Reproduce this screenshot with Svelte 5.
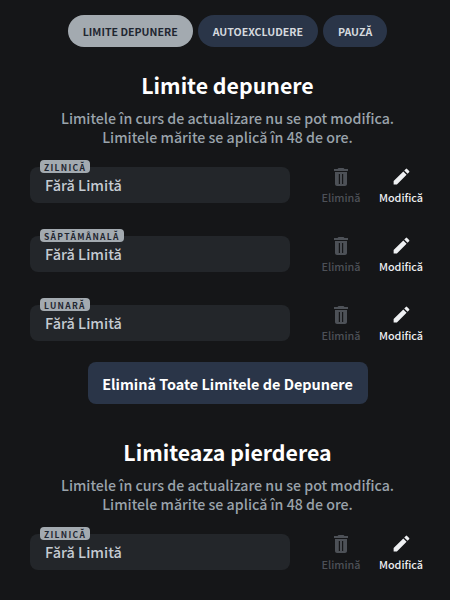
<script>
  const deposit = ['ZILNICĂ', 'SĂPTĂMÂNALĂ', 'LUNARĂ'];
  const loss = ['ZILNICĂ'];
</script>

{#snippet limitRow(label)}
  <div class="row">
    <div class="field">
      <span class="tag">{label}</span>
      <span class="value">Fără Limită</span>
    </div>
    <div class="action off">
      <svg viewBox="0 0 24 24" width="24" height="24"><path fill-rule="evenodd" d="M6 19c0 1.100.9 2 2 2h8c1.100 0 2-.9 2-2V7H6v12zM9.800 9h1.200v10H9.800V9zm3.200 0h1.200v10H13V9zM15.500 4l-1-1h-5l-1 1H5v2h14V4h-3.500z"/></svg>
      <span>Elimină</span>
    </div>
    <div class="action">
      <svg class="pen" viewBox="0 0 24 24" width="21" height="21"><path d="M3 17.25V21h3.750L17.810 9.940l-3.750-3.750L3 17.250zM20.710 7.040a1 1 0 0 0 0-1.410l-2.340-2.340a1 1 0 0 0-1.410 0l-1.830 1.830 3.750 3.750 1.830-1.830z"/></svg>
      <span>Modifică</span>
    </div>
  </div>
{/snippet}

<div class="page">
  <nav class="tabs">
    <button class="tab active">LIMITE DEPUNERE</button>
    <button class="tab">AUTOEXCLUDERE</button>
    <button class="tab">PAUZĂ</button>
  </nav>

  <h2>Limite depunere</h2>
  <p>Limitele în curs de actualizare nu se pot modifica.<br />Limitele mărite se aplică în 48 de ore.</p>
  <div class="rows">
    {#each deposit as label}
      {@render limitRow(label)}
    {/each}
  </div>
  <button class="remove">Elimină Toate Limitele de Depunere</button>

  <h2 class="second">Limiteaza pierderea</h2>
  <p>Limitele în curs de actualizare nu se pot modifica.<br />Limitele mărite se aplică în 48 de ore.</p>
  <div class="rows">
    {#each loss as label}
      {@render limitRow(label)}
    {/each}
  </div>
</div>

<style>
  :global(body) {
    margin: 0;
    background: #151618;
  }
  .page {
    height: 600px;
    overflow: hidden;
    box-sizing: border-box;
    padding: 15px 25px 0 30px;
    display: flex;
    flex-direction: column;
    align-items: center;
    font-family: "Noto Sans CJK SC", "Noto Sans", sans-serif;
    color: #fff;
    background: #151618;
  }
  .tabs {
    display: flex;
    gap: 5px;
  }
  button {
    font-family: inherit;
    border: 0;
    cursor: pointer;
  }
  .tab {
    height: 32px;
    padding: 0 15px;
    border-radius: 16px;
    background: #2a3548;
    color: #d5d9de;
    font-size: 10.6px;
    font-weight: 700;
    white-space: nowrap;
  }
  .tab.active {
    background: #a3aab0;
    color: #1f2630;
  }
  h2 {
    margin: 20px 0 0;
    font-size: 21.3px;
    line-height: 36px;
    font-weight: 700;
    text-align: center;
  }
  h2.second {
    margin-top: 30px;
  }
  p {
    margin: 6px 0 0;
    font-size: 14.2px;
    line-height: 19px;
    font-weight: 500;
    color: #9aa3ab;
    text-align: center;
    white-space: nowrap;
  }
  .rows {
    align-self: stretch;
    margin-right: -6px;
    display: flex;
    flex-direction: column;
    gap: 31px;
    margin-top: 19px;
  }
  .row {
    display: flex;
    align-items: center;
    height: 38px;
  }
  .field {
    position: relative;
    flex: none;
    box-sizing: border-box;
    width: 260px;
    height: 36px;
    padding: 0 0 2px 15px;
    display: flex;
    align-items: center;
    border-radius: 8px;
    background: #23262a;
  }
  .tag {
    position: absolute;
    left: 10px;
    top: -7px;
    height: 13px;
    padding: 0 4px;
    display: flex;
    align-items: center;
    border-radius: 4px;
    background: #a3aab0;
    color: #1f2630;
    font-size: 8.5px;
    font-weight: 700;
    letter-spacing: 1.3px;
  }
  .value {
    font-size: 14.5px;
    font-weight: 500;
    color: #c5cbd2;
  }
  .action {
    flex: none;
    width: 60px;
    display: flex;
    flex-direction: column;
    align-items: center;
    font-size: 10.8px;
    font-weight: 500;
    color: #eef0f2;
    line-height: 14px;
    margin-top: -2px;
  }
  .action svg {
    fill: currentColor;
    display: block;
    margin-bottom: 1px;
  }
  .action .pen {
    margin: 1.5px 0 2.5px;
  }
  .action.off {
    margin-left: 21px;
    color: #4d5157;
  }
  .remove {
    margin: 20px 0 0;
    width: 280px;
    height: 42px;
    border-radius: 8px;
    background: #2a3548;
    color: #fff;
    font-size: 14.4px;
    font-weight: 700;
  }
</style>
